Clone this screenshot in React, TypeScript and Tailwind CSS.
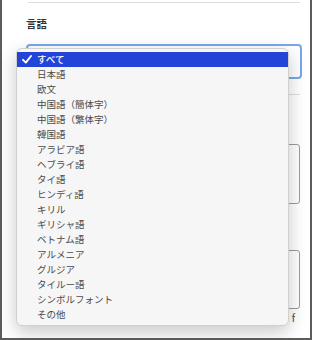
const languages = [
  "すべて",
  "日本語",
  "欧文",
  "中国語（簡体字）",
  "中国語（繁体字）",
  "韓国語",
  "アラビア語",
  "ヘブライ語",
  "タイ語",
  "ヒンディ語",
  "キリル",
  "ギリシャ語",
  "ベトナム語",
  "アルメニア",
  "グルジア",
  "タイルー語",
  "シンボルフォント",
  "その他",
];

const font = { fontFamily: '"Noto Sans CJK JP", "Noto Sans", sans-serif' };

function Check() {
  return (
    <svg width="10" height="9" viewBox="0 0 10 9" className="absolute left-[5px] top-[3px]">
      <path d="M1 4.8 L3.8 7.6 L9 1" fill="none" stroke="white" strokeWidth="1.9" strokeLinecap="round" strokeLinejoin="round" />
    </svg>
  );
}

export default function App() {
  return (
    <div className="w-[312px] h-[340px] relative bg-white border-x-2 border-b-2 border-[#5c5c5c] overflow-hidden" style={font}>
      <div className="pl-[24px] pr-[10px]">
        <div className="mt-[2px] ml-[2px] h-px bg-[#dcdcdc]" />
        <div className="mt-[14px] h-[14px] text-[10.5px] leading-[14px] font-bold text-[#333]">言語</div>
        <div className="mt-[13px] h-[35px] mr-[-2px] rounded-[4px] border-2 border-[#7aa6ee]" />
        <div className="mt-[15px] h-px bg-[#dcdcdc]" />
        <div className="mt-[49px] h-[60px] rounded-[3px] border border-[#9a9a9a]" />
        <div className="mt-[46px] h-[59px] rounded-[3px] border border-[#9a9a9a]" />
        <div className="mt-[3px] text-right pr-[5px] text-[10px] leading-[12px] text-[#444]">f</div>
      </div>

      <div className="absolute left-[14px] top-[48px] w-[273px] rounded-[6px] bg-[#f6f6f6] border border-[#d0d0d0] py-[3px] shadow-[0_6px_18px_rgba(0,0,0,0.22)]">
        {languages.map((lang, i) => (
          <div
            key={lang}
            className={
              i === 0
                ? "relative h-[15px] pl-[20px] text-[9.5px] leading-[15px] bg-[#2344d8] text-white font-medium"
                : "relative h-[15px] pl-[20px] text-[9.5px] leading-[15px] text-[#4a4a4a]"
            }
          >
            {i === 0 && <Check />}
            {lang}
          </div>
        ))}
      </div>
    </div>
  );
}
